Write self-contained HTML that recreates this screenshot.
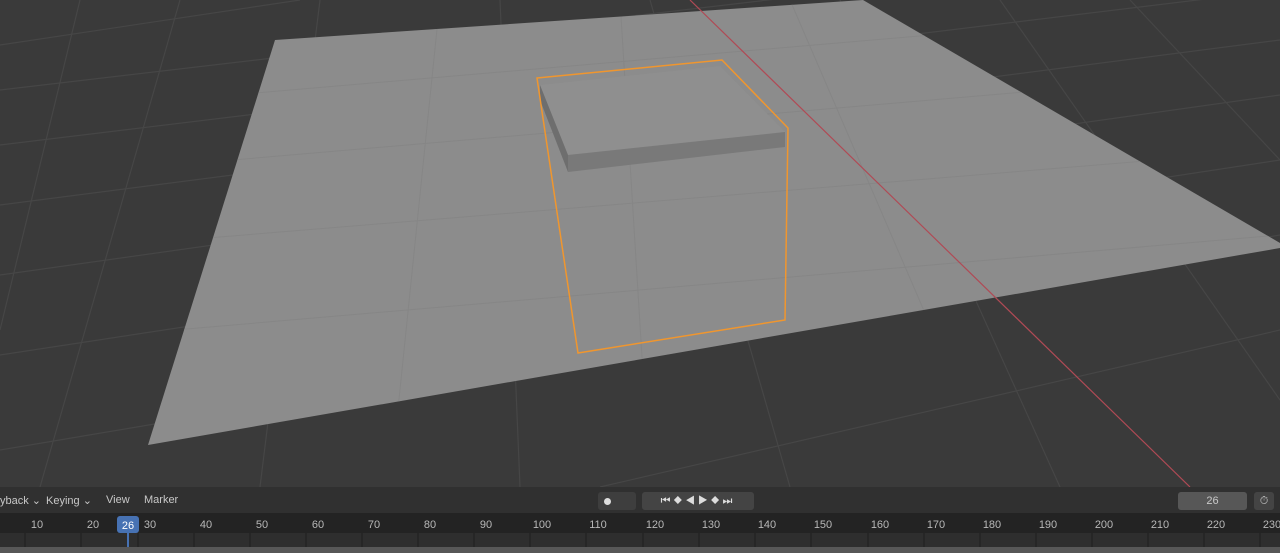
<html><body style="margin:0;width:1280px;height:553px;overflow:hidden;background:#3d3d3d;font-family:'Liberation Sans',sans-serif">
<svg width="1280" height="487" style="position:absolute;left:0;top:0">
<defs><clipPath id="pl"><polygon points="275,40 863,0 1280,243 1280,248 148,445"/></clipPath></defs>
<rect width="1280" height="487" fill="#3a3a3a"/>
<g stroke="#464646" stroke-width="1.2">
<line x1="0" y1="45" x2="300" y2="0"/><line x1="0" y1="90" x2="1280" y2="-60"/>
<line x1="0" y1="145" x2="1280" y2="-10"/><line x1="0" y1="205" x2="1280" y2="40"/>
<line x1="0" y1="275" x2="1280" y2="95"/><line x1="0" y1="355" x2="1280" y2="160"/>
<line x1="0" y1="450" x2="1280" y2="235"/><line x1="600" y1="487" x2="1280" y2="330"/>
<line x1="80" y1="0" x2="0" y2="330"/><line x1="180" y1="0" x2="40" y2="487"/>
<line x1="320" y1="0" x2="260" y2="487"/><line x1="500" y1="0" x2="520" y2="487"/>
<line x1="650" y1="0" x2="790" y2="487"/><line x1="840" y1="0" x2="1060" y2="487"/>
<line x1="1000" y1="0" x2="1280" y2="400"/><line x1="1130" y1="0" x2="1280" y2="160"/>
</g>
<polygon points="275,40 863,0 1280,243 1280,248 148,445" fill="#8c8c8c"/>
<g stroke="#868686" stroke-width="1" clip-path="url(#pl)">
<line x1="0" y1="115" x2="1280" y2="5"/><line x1="0" y1="180" x2="1280" y2="70"/>
<line x1="0" y1="255" x2="1280" y2="150"/><line x1="0" y1="345" x2="1280" y2="235"/>
<line x1="440" y1="0" x2="390" y2="487"/><line x1="620" y1="0" x2="650" y2="487"/>
<line x1="790" y1="0" x2="1000" y2="487"/>
</g>
<line x1="690" y1="0" x2="1190" y2="487" stroke="#b04a55" stroke-width="1.2"/>
<polygon points="540,85 720,66 785,132 568,155" fill="#8f8f8f"/>
<polygon points="540,85 568,155 568,172 540,100" fill="#6e6e6e"/>
<polygon points="568,155 785,132 785,147 568,172" fill="#797979"/>
<polygon points="537,78 722,60 788,128 785,320 578,353 537,78" fill="none" stroke="#f0962e" stroke-width="1.5"/>
</svg>
<div style="position:absolute;top:487px;left:0;width:1280px;height:26px;background:#303030;color:#c8c8c8;font-size:11px">
<span style="position:absolute;left:0;top:7px">yback ⌄</span>
<span style="position:absolute;left:46px;top:7px">Keying ⌄</span>
<span style="position:absolute;left:106px;top:7px">View</span>
<span style="position:absolute;left:144px;top:7px">Marker</span>
<div style="position:absolute;left:598px;top:5px;width:38px;height:18px;background:#3e3e3e;border-radius:3px"></div>
<div style="position:absolute;left:604px;top:11px;width:7px;height:7px;background:#ddd;border-radius:50%"></div>
<div style="position:absolute;left:642px;top:5px;width:112px;height:18px;background:#444;border-radius:3px;color:#ddd;font-size:11px;line-height:18px;text-align:center;letter-spacing:3px">⏮◆◀▶◆⏭</div>
<div style="position:absolute;left:1178px;top:5px;width:69px;height:18px;background:#575757;border-radius:3px;text-align:center;line-height:18px">26</div>
<div style="position:absolute;left:1254px;top:5px;width:20px;height:18px;background:#444;border-radius:3px;text-align:center;line-height:18px">⏱</div>
</div>
<div style="position:absolute;top:513px;left:0;width:1280px;height:20px;background:#232323"></div>
<div style="position:absolute;top:533px;left:0;width:1280px;height:14px;background:#2e2e2e"></div>
<div style="position:absolute;top:547px;left:0;width:1280px;height:6px;background:#575757"></div>
<svg width="1280" height="60" style="position:absolute;left:0;top:493px">
<g fill="#b8b8b8" font-size="11" font-family="Liberation Sans" text-anchor="middle">
<text x="37" y="35">10</text><text x="93" y="35">20</text><text x="150" y="35">30</text><text x="206" y="35">40</text><text x="262" y="35">50</text><text x="318" y="35">60</text><text x="374" y="35">70</text><text x="430" y="35">80</text><text x="486" y="35">90</text><text x="542" y="35">100</text><text x="598" y="35">110</text><text x="655" y="35">120</text><text x="711" y="35">130</text><text x="767" y="35">140</text><text x="823" y="35">150</text><text x="880" y="35">160</text><text x="936" y="35">170</text><text x="992" y="35">180</text><text x="1048" y="35">190</text><text x="1104" y="35">200</text><text x="1160" y="35">210</text><text x="1216" y="35">220</text><text x="1272" y="35">230</text>
</g>
<g stroke="#1e1e1e"><path d="M25 40v14M81 40v14M138 40v14M194 40v14M250 40v14M306 40v14M362 40v14M418 40v14M474 40v14M530 40v14M586 40v14M643 40v14M699 40v14M755 40v14M811 40v14M868 40v14M924 40v14M980 40v14M1036 40v14M1092 40v14M1148 40v14M1204 40v14M1260 40v14"/></g>
<rect x="117" y="23" width="22" height="17" rx="3" fill="#4772b3"/>
<text x="128" y="36" fill="#fff" font-size="11" font-family="Liberation Sans" text-anchor="middle">26</text>
<line x1="128" y1="40" x2="128" y2="54" stroke="#4772b3" stroke-width="2"/>
</svg>
</body></html>
